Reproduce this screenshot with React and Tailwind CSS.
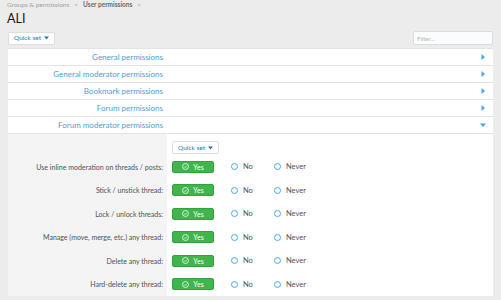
import React from 'react';

const sections = [
  'General permissions',
  'General moderator permissions',
  'Bookmark permissions',
  'Forum permissions',
];

const perms = [
  'Use inline moderation on threads / posts:',
  'Stick / unstick thread:',
  'Lock / unlock threads:',
  'Manage (move, merge, etc.) any thread:',
  'Delete any thread:',
  'Hard-delete any thread:',
];

const Caret = ({ down }) => (
  <svg width="6" height="6" viewBox="0 0 6 6" className="text-[#47a7eb]">
    {down ? <path d="M0 1.5h6L3 5z" fill="currentColor" /> : <path d="M1.5 0v6L5 3z" fill="currentColor" />}
  </svg>
);

const QuickSet = () => (
  <button className="flex items-center gap-[3px] h-[13px] px-[5px] bg-white border border-[#dfdfdf] rounded-[2px] text-[6.5px] text-[#2577b1]">
    Quick set
    <svg width="5" height="4" viewBox="0 0 5 4"><path d="M0 0.5h5L2.5 3.5z" fill="#2577b1" /></svg>
  </button>
);

const Radio = ({ label }) => (
  <label className="flex items-center gap-[5px] text-[7.5px] text-[#505050]">
    <span className="w-[7px] h-[7px] rounded-full border border-[#47a7eb] bg-white" />
    {label}
  </label>
);

const App = () => {
  return (
    <div className="w-[501px] h-[300px] overflow-hidden bg-[#ececec] font-['Lato',sans-serif]">
      {/* breadcrumb */}
      <div className="flex items-center gap-[5px] px-[7px] h-[10px] text-[6.5px] text-[#a0a0a0]">
        <span>Groups &amp; permissions</span>
        <span>&gt;</span>
        <span className="font-bold text-[#6a6a6a]">User permissions</span>
        <span>&gt;</span>
      </div>

      <h1 className="px-[7px] mt-[2px] h-[18px] text-[12.5px] leading-[14px] text-[#141414]">ALI</h1>

      <div className="flex items-center justify-between px-[8px] mt-[1px] h-[14px]">
        <QuickSet />
        <input
          placeholder="Filter..."
          className="w-[80px] h-[14px] px-[3px] text-[6px] bg-[#fafcfe] border border-[#dcdcdc] rounded-[2px] outline-none placeholder:text-[#b5b5b5]"
        />
      </div>

      <div className="mx-[8px] mt-[3px] flex flex-col gap-px bg-[#e3e3e3] border-t border-[#e3e3e3]">
        {sections.map(s => (
          <div key={s} className="flex items-center h-[16px] bg-white">
            <div className="w-[159px] pr-[4px] text-right text-[8px] text-[#4d9ed6]">{s}</div>
            <div className="flex-1 flex justify-end pr-[7px]"><Caret /></div>
          </div>
        ))}
        <div className="flex items-center h-[16px] bg-white">
          <div className="w-[159px] pr-[4px] text-right text-[8px] text-[#4d9ed6]">Forum moderator permissions</div>
          <div className="flex-1 flex justify-end pr-[7px]"><Caret down /></div>
        </div>

        <div className="flex bg-white">
          <div className="w-[159px] bg-[#f4f4f4] flex flex-col pt-[21px]">
            {perms.map(p => (
              <div key={p} className="h-[23.5px] pr-[4px] flex items-center justify-end text-[7px] text-[#505050]">{p}</div>
            ))}
          </div>
          <div className="flex-1 flex flex-col pl-[5px] pt-[7px]">
            <div className="h-[14px]"><QuickSet /></div>
            {perms.map(p => (
              <div key={p} className="h-[23.5px] flex items-center">
                <span className="flex items-center justify-center gap-[4px] w-[42px] h-[12px] rounded-[2px] bg-[#40b54b] border border-[#35a040] text-[7px] text-white">
                  <svg width="7" height="7" viewBox="0 0 8 8" fill="none" stroke="white" strokeWidth="0.9">
                    <circle cx="4" cy="4" r="3.4" />
                    <path d="M2.5 4.1l1.1 1.1 2-2.1" />
                  </svg>
                  Yes
                </span>
                <div className="ml-[17px] w-[43px]"><Radio label="No" /></div>
                <Radio label="Never" />
              </div>
            ))}
          </div>
        </div>
      </div>
    </div>
  );
};

export default App;
